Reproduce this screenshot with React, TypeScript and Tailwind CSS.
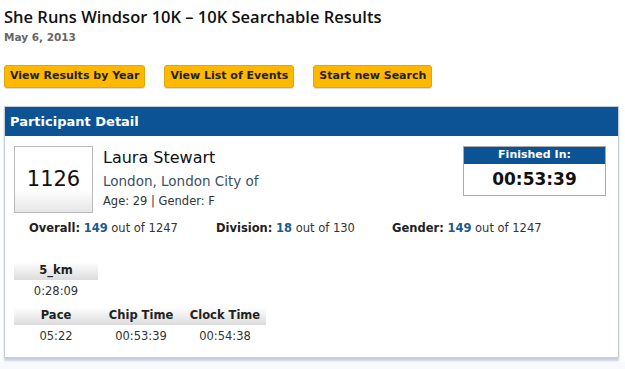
import React from "react";

const verdana = { fontFamily: '"DejaVu Sans", Verdana, sans-serif' };

const YellowButton = (props: { label: string }) => (
  <button className="h-[23px] rounded-[3px] border border-[#e0a800] bg-[#ffb800] px-[5px] text-[11px] font-bold text-[#222] shadow-[0_1px_1px_rgba(0,0,0,0.15)]">
    {props.label}
  </button>
);

const Stat = (props: { label: string; value: string; total: string; className?: string }) => (
  <div className={props.className}>
    <span className="font-bold text-[#222]">{props.label}</span>{" "}
    <span className="font-bold text-[#1d5a8e]">{props.value}</span>{" "}
    <span className="text-[#333]">out of {props.total}</span>
  </div>
);

const HeadCell = (props: { children: React.ReactNode; w: string }) => (
  <div
    className={`${props.w} flex h-[18px] items-center justify-center bg-gradient-to-b from-[#ffffff] to-[#dcdcdc] text-[11.5px] font-bold text-[#222]`}
  >
    {props.children}
  </div>
);

const ValCell = (props: { children: React.ReactNode; w: string }) => (
  <div className={`${props.w} flex h-[24px] items-center justify-center text-[11.5px] text-[#333]`}>
    {props.children}
  </div>
);

export default function App() {
  return (
    <div className="h-[369px] w-[625px] overflow-hidden bg-white" style={verdana}>
      <div className="px-[4px] pt-[7px]">
        <h1
          className="text-[16.5px] font-semibold leading-[20px] text-[#111]"
          style={{ fontFamily: '"Open Sans", sans-serif' }}
        >
          She Runs Windsor 10K – 10K Searchable Results
        </h1>
        <div className="mt-[3px] text-[10.5px] font-bold text-[#666]">May 6, 2013</div>

        <div className="mt-[19px] flex gap-[19px]">
          <YellowButton label="View Results by Year" />
          <YellowButton label="View List of Events" />
          <YellowButton label="Start new Search" />
        </div>

        <div className="mr-[2px] mt-[18px] border border-[#c8ccd4] shadow-[0_3px_2px_#c9cfe0]">
          <div className="flex h-[29px] items-center bg-[#0b5394] px-[5px] text-[13px] font-bold text-white">
            Participant Detail
          </div>
          <div className="bg-white px-[9px] pb-[8px] pt-[10px]">
            <div className="flex items-start">
              <div className="flex h-[67px] w-[79px] items-center justify-center border border-[#bbbbbb] bg-[linear-gradient(to_bottom,#ffffff_0%,#ffffff_65%,#e6e6e6_100%)] text-[21px] text-[#111]">
                1126
              </div>
              <div className="ml-[10px] flex-1">
                <div className="mt-[2px] text-[16px] leading-[20px] text-[#111]">Laura Stewart</div>
                <div className="mt-[5px] text-[13.5px] leading-[16px] text-[#3d4f66]">London, London City of</div>
                <div className="mt-[5px] text-[11.5px] leading-[14px] text-[#333]">Age: 29 | Gender: F</div>
              </div>
              <div className="mr-[3px] w-[143px] border border-[#aaaaaa]">
                <div className="flex h-[17px] items-center justify-center bg-[#0b5394] text-[11px] font-bold text-white">
                  Finished In:
                </div>
                <div className="flex h-[31px] items-center justify-center text-[17px] font-bold text-[#111]">
                  00:53:39
                </div>
              </div>
            </div>

            <div className="mt-[8px] flex text-[11.5px] leading-[14px]">
              <Stat className="ml-[15px] w-[187px]" label="Overall:" value="149" total="1247" />
              <Stat className="w-[176px]" label="Division:" value="18" total="130" />
              <Stat label="Gender:" value="149" total="1247" />
            </div>

            <div className="mt-[27px] flex">
              <HeadCell w="w-[84px]">5_km</HeadCell>
            </div>
            <div className="flex">
              <ValCell w="w-[84px]">0:28:09</ValCell>
            </div>
            <div className="mt-[3px] flex">
              <HeadCell w="w-[84px]">Pace</HeadCell>
              <HeadCell w="w-[86px]">Chip Time</HeadCell>
              <HeadCell w="w-[82px]">Clock Time</HeadCell>
            </div>
            <div className="flex">
              <ValCell w="w-[84px]">05:22</ValCell>
              <ValCell w="w-[86px]">00:53:39</ValCell>
              <ValCell w="w-[82px]">00:54:38</ValCell>
            </div>
          </div>
        </div>
      </div>
      <div className="mt-[4px] h-[10px] bg-[#f7f9fc]" />
    </div>
  );
}
